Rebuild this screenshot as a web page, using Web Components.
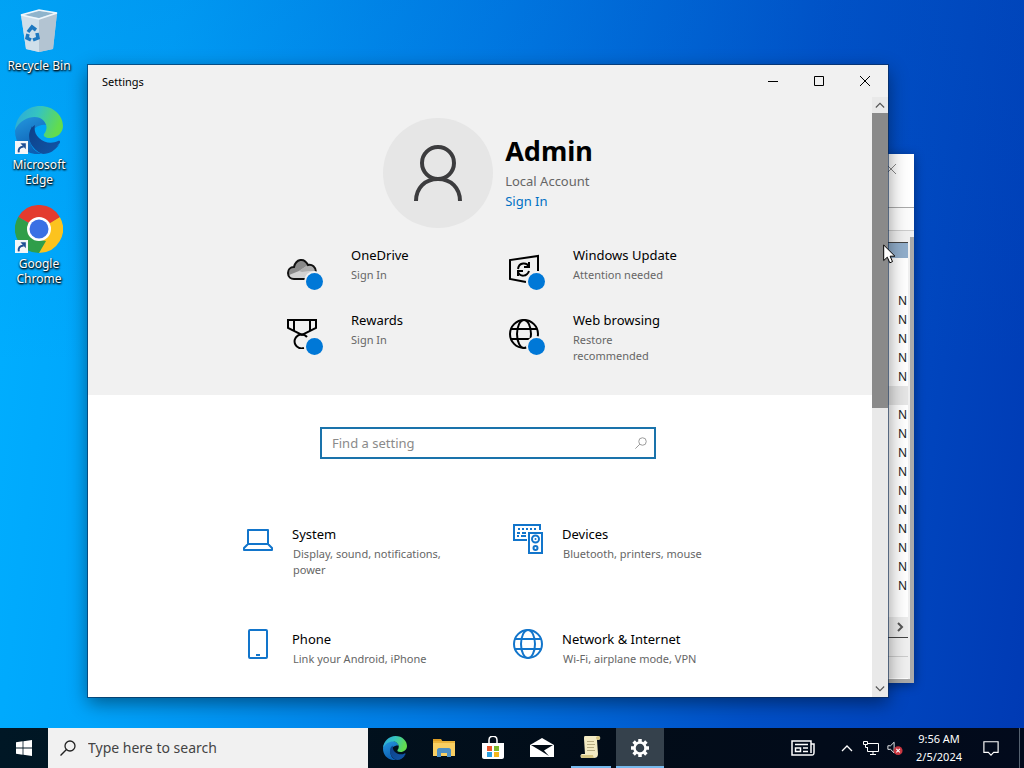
<!DOCTYPE html>
<html lang="en">
<head>
<meta charset="utf-8">
<meta name="viewport" content="width=device-width, initial-scale=1">
<title>Desktop</title>
<style>
  html, body {
    margin: 0;
    height: 100%;
    overflow: hidden;
    font-family: "Noto Sans", "Open Sans", sans-serif;
  }
</style>
</head>
<body>
<desktop-shell></desktop-shell>

<script>
'use strict';

const EDGE = `
  <defs>
    <linearGradient id="a" x1="0" y1="0" x2="1" y2=".3"><stop offset="0" stop-color="#2ba5df"/><stop offset=".5" stop-color="#35c4c0"/><stop offset="1" stop-color="#62dc4e"/></linearGradient>
    <linearGradient id="b" x1="0" y1="0" x2=".4" y2="1"><stop offset="0" stop-color="#2599df"/><stop offset="1" stop-color="#0c5fb4"/></linearGradient>
    <linearGradient id="c" x1="0" y1="0" x2="1" y2="1"><stop offset="0" stop-color="#0d4088"/><stop offset="1" stop-color="#1156a8"/></linearGradient>
  </defs>
  <path fill="url(#b)" d="M0 25C1 14 9 10 17 10c9 0 14 5 14 9-7-1-16 4-16 14 0 7 5 13 12 15C11 50 0 39 0 25z"/>
  <path fill="url(#c)" d="M20 19c-7 4-8 15-2 22 7 8 19 6 26-3 2-2 1-4-1-3-6 3-14 2-19-3-4-4-5-8-4-13z"/>
  <path fill="url(#c)" d="M17 20c-5 11 0 25 11 28 7 0 12-4 16-9-6 3-13 3-19-1-6-5-9-10-8-18z"/>
  <path fill="url(#a)" d="M0 24C1 10 12 0 25 0c14 0 23 10 23 20 0 7-6 12-13 12-5 0-7-2-6-4 4-5 3-10-1-14C22 8 6 11 0 24z"/>`;

const GLOBE = `
  <circle cx="15" cy="15" r="14"/><ellipse cx="15" cy="15" rx="7" ry="14"/>
  <path d="M2 10h26M2 20h26"/>`;

const ICONS = {
  bin: ['0 0 48 48', `
    <path fill="#b9d3e6" d="M6 8l18-5 18 3-4 36-14 3-13-3z"/>
    <path fill="#cfdfea" d="M6 8l18 4v33l-13-3z"/>
    <path fill="#b3c4d2" d="M42 6l-18 6v33l14-3z"/>
    <path fill="#8fb4cc" d="M9 8l15-4 15 2-15 5z"/>
    <path fill="none" stroke="#eef6fb" stroke-width="1.500" d="M6 8l18-5 18 3-18 6z"/>
    <path fill="none" stroke="#1c78c0" stroke-width="3.500" d="M13 25l4-5 4 3M22 26l1 5-5 2M16 33l-4-2 1-4"/>`],
  edge: ['0 0 48 48', EDGE],
  chrome: ['0 0 48 48', `
    <path fill="#e33b2e" d="M24 24L3.200 12A24 24 0 0 1 44.800 12z"/>
    <path fill="#fcc31e" d="M24 24l20.800-12A24 24 0 0 1 24 48z"/>
    <path fill="#2f9e4a" d="M24 24v24A24 24 0 0 1 3.200 12z"/>
    <path fill="#e33b2e" d="M24 12h20.800L32 20z"/>
    <path fill="#2f9e4a" d="M3.200 12l10.400 18 9-3z"/>
    <path fill="#fcc31e" d="M24 48l10.400-18-5-5z"/>
    <path fill="#2f9e4a" d="M24 48l7-12-10-2-7-4z"/>
    <circle cx="24" cy="24" r="12" fill="#fff"/><circle cx="24" cy="24" r="9.500" fill="#3a70e4"/>`],
  shortcut: ['0 0 12 12', `
    <path fill="#f4f6f8" d="M0 0h12v12H0z"/>
    <path fill="none" stroke="#1f4f94" stroke-width="1.800" d="M3.500 10.500C3 7.500 4 5.500 8 5"/>
    <path fill="#1f4f94" d="M5 2h5v5.500z"/>`],
  person: ['0 0 50 58', `
    <g fill="none" stroke="#3c3c3e" stroke-width="4"><circle cx="25" cy="19" r="16"/><path d="M3 57c0-13 9-22 22-22s22 9 22 22"/></g>`],
  onedrive: ['0 0 30 30', `
    <path fill="#d2d2d2" d="M7 25a6 6 0 0 1-1-12C8 4 17 4 21 11c5-1 8 3 8 7v7z"/>
    <path fill="#8a8a8a" d="M2 21c-1-5 2-8 5-8 2-8 11-8 14-2l-9 6z"/>
    <path fill="#aeaeae" d="M12 17l9-6c5-1 7 3 7 6l-6 0-7 1z"/>
    <path fill="none" stroke="#111" stroke-width="2" d="M29 18c0-5-4-8-8-7C17 3 9 5 7 13c-4 0-6 3-6 6 0 4 3 6 6 6h11"/>`],
  update: ['0 0 30 30', `
    <g fill="none" stroke="#000" stroke-width="2"><path d="M17 28L1 25V6l28-4v15"/><path d="M9 15c1-7 9-7 11-2M20 17c-2 6-9 6-11 1"/><path d="M20 8v5h-5M9 22v-5h5"/></g>`],
  rewards: ['0 0 30 30', `
    <g fill="none" stroke="#000" stroke-width="2"><path d="M1 1h28v8l-14 7L1 9zM7 1v11M23 1v11"/><path d="M20 18a7 7 0 1 0-3 11"/></g>`],
  web: ['0 0 30 30', `<g fill="none" stroke="#000" stroke-width="2">${GLOBE}</g>`],
  network: ['0 0 30 30', `<g fill="none" stroke="#1275cb" stroke-width="2">${GLOBE}</g>`],
  system: ['0 0 30 30', `
    <path fill="none" stroke="#1275cb" stroke-width="2" stroke-linejoin="round" d="M5 20V6h20v14M5 20h20l4 4v2H1v-2z"/>`],
  phone: ['0 0 30 30', `
    <g fill="none" stroke="#1275cb" stroke-width="2"><rect x="6" y="1" width="18" height="28" rx="1"/><path d="M13 26h4"/></g>`],
  devices: ['0 0 30 30', `
    <g fill="none" stroke="#1275cb" stroke-width="2"><path d="M14 16H1V1h26v5"/><path d="M5 5h18" stroke-dasharray="2 2"/><path d="M4 9h3M9 9h4M4 12h2M8 12h5"/>
    <path d="M16 9h13v20H16z"/><circle cx="22.500" cy="15" r="3.500"/><circle cx="22.500" cy="24" r="2"/></g><circle cx="22.500" cy="15" r="1" fill="#1275cb"/>`],
  search: ['0 0 16 16', `
    <g fill="none" stroke="currentColor" stroke-width="1.300"><circle cx="10" cy="6" r="5"/><path d="M6.500 9.500L.5 15.500"/></g>`],
  minimize: ['0 0 10 10', '<path stroke="currentColor" d="M0 5.500h10"/>'],
  maximize: ['0 0 10 10', '<path fill="none" stroke="currentColor" d="M.5.5h9v9h-9z"/>'],
  close: ['0 0 10 10', '<path fill="none" stroke="currentColor" d="M0 0l10 10M10 0L0 10"/>'],
  up: ['0 0 12 12', '<path fill="none" stroke="currentColor" stroke-width="1.300" d="M1 9l5-5 5 5"/>'],
  down: ['0 0 12 12', '<path fill="none" stroke="currentColor" stroke-width="1.300" d="M1 3l5 5 5-5"/>'],
  right: ['0 0 12 12', '<path fill="none" stroke="currentColor" stroke-width="2" d="M3 2l4 4-4 4"/>'],
  windows: ['0 0 16 16', '<path fill="#fff" d="M0 2.300l6.600-1v6.300H0zM7.400 1.200L16 0v7.600H7.400zM0 8.400h6.600v6.300L0 13.700zM7.400 8.400H16V16l-8.600-1.200z"/>'],
  explorer: ['0 0 24 24', `
    <path fill="#dd9d25" d="M1 3h8l2 3H1z"/><path fill="#f9cf62" d="M1 5h22v15H1z"/><path fill="#eab43c" d="M1 5h22v2H1z"/>
    <path fill="#4d8fc4" d="M5 21v-7c0-1 1-2 2-2h10c1 0 2 1 2 2v7h-4v-4H9v4z"/>`],
  store: ['0 0 24 24', `
    <path fill="none" stroke="#fff" stroke-width="1.500" d="M8 8V4c0-5 8-5 8 0v4"/><path fill="#fff" d="M1 7h22v14c0 1-1 2-2 2H3c-1 0-2-1-2-2z"/>
    <path fill="#e8552b" d="M6 10h5v5H6z"/><path fill="#7cb829" d="M13 10h5v5h-5z"/><path fill="#2ba0e0" d="M6 16h5v5H6z"/><path fill="#f6b71c" d="M13 16h5v5h-5z"/>`],
  mail: ['0 0 24 24', `
    <path fill="#fff" d="M0 9l12-7 12 7v12H0z"/><path fill="#020c16" d="M1 9h22l-9 5.500L19 20l-8-5z"/>`],
  scroll: ['0 0 24 24', `
    <path fill="#f3ebc4" d="M6 1h13c3 0 3 4 0 4h-1l1 14c0 3-2 4-4 4H3c-2 0-2-4 0-4h3L5 4c0-2 0-3 1-3z"/>
    <path fill="#d6c583" d="M17 3c0-2 4-3 4 0 0 2-2 2-3 2zM2 20h12c0 2 1 3 2 3H4c-2 0-2-2-2-3z"/>
    <path stroke="#b8ad83" d="M8 6.500h7M8 9.500h8M8 12.500h7M8 15.500h8"/>`],
  gear: ['0 0 24 24', `
    <g fill="none" stroke="#fff"><circle cx="12" cy="12" r="5.500" stroke-width="2.500"/>
    <path stroke-width="3.500" d="M12 3v3M12 18v3M3 12h3M18 12h3M5.600 5.600l2.200 2.200M16.200 16.200l2.200 2.200M5.600 18.400l2.200-2.200M16.200 7.800l2.200-2.200"/></g>`],
  news: ['0 0 24 16', `
    <g fill="none" stroke="#fff" stroke-width="1.500"><path d="M20 4V1H1v14h20c2 0 2-1 2-3V4h-3v9"/><path d="M4 4.500h13M12 8h5M12 11.500h5M4.500 8h5v3.500h-5z"/></g>`],
  net: ['0 0 16 16', `
    <g fill="none" stroke="#fff"><path d="M5 3.500h10.500v8H4.500V7M7 14.500h6M10 11.500v3"/><path d="M.5 1.500h4v3h-4zM2.500 4.500v3h2"/></g>`],
  sound: ['0 0 18 16', `
    <path fill="none" stroke="#fff" d="M1 5.500h3l4-4v12l-4-4H1z"/><circle cx="12.500" cy="11" r="5" fill="#c93640"/>
    <path stroke="#fff" stroke-width="1.200" d="M10.500 9l4 4M14.500 9l-4 4"/>`],
  action: ['0 0 18 18', '<path fill="none" stroke="#fff" stroke-width="1.300" d="M1 2h16v12h-5l-3 3-3-3H1z"/>'],
  pointer: ['0 0 13 20', '<path fill="#fff" stroke="#000" d="M.7 1v15.500l3.600-3.300 2.500 5.600 2.700-1.200-2.400-5.400h4.800z"/>'],
};

class UiIcon extends HTMLElement {
  static get is() { return 'ui-icon'; }
  constructor() {
    super();
    this.attachShadow({mode: 'open'});
  }
  connectedCallback() {
    const [box, shape] = ICONS[this.getAttribute('name')];
    this.shadowRoot.innerHTML = `
      <style>
        :host { display: block; flex: none; width: 16px; height: 16px; }
        svg { display: block; width: 100%; height: 100%; }
      </style>
      <svg viewBox="${box}" aria-hidden="true">${shape}</svg>
    `;
  }
}
customElements.define(UiIcon.is, UiIcon);

class DesktopIcon extends HTMLElement {
  static get is() { return 'desktop-icon'; }
  constructor() {
    super();
    this.attachShadow({mode: 'open'});
  }
  connectedCallback() {
    const link = this.hasAttribute('shortcut') ? '<ui-icon class="link" name="shortcut"></ui-icon>' : '';
    this.shadowRoot.innerHTML = `
      <style>
        :host { display: block; }
        button {
          display: flex; flex-direction: column; align-items: center; gap: 3px;
          width: 100%; padding: 0; border: 0; background: none;
          font: 12px/15px "Noto Sans", sans-serif; color: #fff;
          text-shadow: 0 1px 2px #000, 1px 1px 2px #000;
        }
        .art { position: relative; }
        .art ui-icon { width: 48px; height: 48px; }
        .art .link { position: absolute; left: 0; bottom: 0; width: 13px; height: 13px; }
        .label { max-width: 64px; }
      </style>
      <button type="button">
        <span class="art"><ui-icon name="${this.getAttribute('icon')}"></ui-icon>${link}</span>
        <span class="label"><slot></slot></span>
      </button>
    `;
    if (!link) this.shadowRoot.querySelector('.label').style.whiteSpace = 'nowrap';
  }
}
customElements.define(DesktopIcon.is, DesktopIcon);

class ScrollBar extends HTMLElement {
  static get is() { return 'scroll-bar'; }
  constructor() {
    super();
    this.attachShadow({mode: 'open'});
    this.shadowRoot.innerHTML = `
      <style>
        :host { display: flex; flex-direction: column; width: 16px; background: #e9e9e9; color: #555; }
        button { display: grid; place-items: center; height: 16px; padding: 0; border: 0; background: none; color: inherit; }
        ui-icon { width: 10px; height: 10px; }
        .track { flex: 1; }
        .thumb { height: 52%; background: #8a8a8a; }
      </style>
      <button type="button" aria-label="Scroll up"><ui-icon name="up"></ui-icon></button>
      <div class="track"><div class="thumb"></div></div>
      <button type="button" aria-label="Scroll down"><ui-icon name="down"></ui-icon></button>
    `;
  }
}
customElements.define(ScrollBar.is, ScrollBar);

// one status line in the account header
class StatusTile extends HTMLElement {
  static get is() { return 'status-tile'; }
  constructor() {
    super();
    this.attachShadow({mode: 'open'});
  }
  connectedCallback() {
    this.shadowRoot.innerHTML = `
      <style>
        :host { display: block; }
        a { display: flex; gap: 28px; padding-left: 21px; color: #000; text-decoration: none; }
        .art { position: relative; width: 36px; height: 36px; padding-top: 9px; }
        .art ui-icon { width: 30px; height: 30px; }
        .art i {
          position: absolute; right: 0; bottom: 0; width: 17px; height: 17px;
          border-radius: 50%; background: #0078d7; box-shadow: 0 0 0 2px #f1f1f1;
        }
        .text { display: flex; flex-direction: column; gap: 2px; flex: 1; max-width: 108px; }
        .title { font-size: 13px; line-height: 20px; white-space: nowrap; }
        .note { font-size: 11px; line-height: 16px; color: #666; }
      </style>
      <a href="#">
        <span class="art"><ui-icon name="${this.getAttribute('icon')}"></ui-icon><i></i></span>
        <span class="text">
          <span class="title">${this.getAttribute('heading')}</span>
          <span class="note"><slot></slot></span>
        </span>
      </a>
    `;
  }
}
customElements.define(StatusTile.is, StatusTile);

class SettingsCategory extends HTMLElement {
  static get is() { return 'settings-category'; }
  constructor() {
    super();
    this.attachShadow({mode: 'open'});
  }
  connectedCallback() {
    this.shadowRoot.innerHTML = `
      <style>
        :host { display: block; }
        a { display: flex; gap: 19px; padding: 0 10px 0 25px; color: #000; text-decoration: none; }
        ui-icon { width: 30px; height: 30px; }
        .text { display: flex; flex-direction: column; gap: 2px; flex: 1; }
        .title { font-size: 13px; line-height: 20px; }
        .note { font-size: 11px; line-height: 16px; color: #666; max-width: 160px; padding-left: 1px; }
      </style>
      <a href="#">
        <ui-icon name="${this.getAttribute('icon')}"></ui-icon>
        <span class="text">
          <span class="title">${this.getAttribute('heading')}</span>
          <span class="note"><slot></slot></span>
        </span>
      </a>
    `;
  }
}
customElements.define(SettingsCategory.is, SettingsCategory);

class SettingsWindow extends HTMLElement {
  static get is() { return 'settings-window'; }
  constructor() {
    super();
    this.attachShadow({mode: 'open'});
    this.shadowRoot.innerHTML = `
      <style>
        :host {
          display: flex; flex-direction: column; background: #fff; color: #000;
          outline: 1px solid rgba(10, 40, 80, .6);
          box-shadow: 0 6px 18px rgba(0, 0, 0, .45);
        }
        .bar { display: flex; align-items: center; height: 32px; padding-left: 14px; background: #f1f1f1; font-size: 11px; }
        .bar span { flex: 1; }
        .bar button { display: grid; place-items: center; width: 46px; height: 32px; padding: 0; border: 0; background: none; color: #000; }
        .bar ui-icon { width: 10px; height: 10px; }
        .body { position: relative; flex: 1; overflow: hidden; }
        scroll-bar { position: absolute; top: 0; right: 0; bottom: 0; }
        header { padding: 21px 0 20px; background: #f1f1f1; }
        .account { display: flex; justify-content: center; align-items: center; gap: 12px; }
        .avatar { display: grid; place-items: center; width: 110px; height: 110px; border-radius: 50%; background: #e6e6e6; }
        .avatar ui-icon { width: 50px; height: 58px; }
        .who { display: flex; flex-direction: column; padding-bottom: 5px; font-size: 13px; line-height: 20px; color: #666; }
        h1 { margin: 0; font-size: 27px; line-height: 40px; color: #000; }
        .who a { color: #0070c4; text-decoration: none; }
        .status { display: grid; grid-template-columns: 222px 222px; grid-auto-rows: minmax(65px, auto); justify-content: center; margin-top: 17px; }
        .find {
          display: flex; align-items: center; box-sizing: border-box; width: 336px; height: 32px;
          margin: 32px auto 65px; padding: 0 7px 0 10px; border: 2px solid #1a73ab; color: #999;
        }
        input { flex: 1; min-width: 0; padding: 0; border: 0; outline: 0; background: none; font: 13px/20px "Noto Sans", sans-serif; color: #000; }
        input::placeholder { color: #8a8a8a; opacity: 1; }
        .find ui-icon { width: 12px; height: 12px; }
        nav { display: grid; grid-template-columns: 270px 270px; grid-auto-rows: minmax(105px, auto); justify-content: center; }
      </style>
      <div class="bar">
        <span>Settings</span>
        <button type="button" aria-label="Minimize"><ui-icon name="minimize"></ui-icon></button>
        <button type="button" aria-label="Maximize"><ui-icon name="maximize"></ui-icon></button>
        <button type="button" aria-label="Close"><ui-icon name="close"></ui-icon></button>
      </div>
      <div class="body">
        <header>
          <div class="account">
            <div class="avatar"><ui-icon name="person"></ui-icon></div>
            <div class="who">
              <h1>Admin</h1>
              <span>Local Account</span>
              <a href="#">Sign In</a>
            </div>
          </div>
          <div class="status">
            <status-tile icon="onedrive" heading="OneDrive">Sign In</status-tile>
            <status-tile icon="update" heading="Windows Update">Attention needed</status-tile>
            <status-tile icon="rewards" heading="Rewards">Sign In</status-tile>
            <status-tile icon="web" heading="Web browsing">Restore recommended</status-tile>
          </div>
        </header>
        <label class="find">
          <input type="text" placeholder="Find a setting" aria-label="Find a setting">
          <ui-icon name="search"></ui-icon>
        </label>
        <nav>
          <settings-category icon="system" heading="System">Display, sound, notifications, power</settings-category>
          <settings-category icon="devices" heading="Devices">Bluetooth, printers, mouse</settings-category>
          <settings-category icon="phone" heading="Phone">Link your Android, iPhone</settings-category>
          <settings-category icon="network" heading="Network &amp; Internet">Wi-Fi, airplane mode, VPN</settings-category>
        </nav>
        <scroll-bar></scroll-bar>
      </div>
    `;
  }
}
customElements.define(SettingsWindow.is, SettingsWindow);

// classic window, mostly covered by the settings one
class ListWindow extends HTMLElement {
  static get is() { return 'list-window'; }
  constructor() {
    super();
    this.attachShadow({mode: 'open'});
    const rows = Array.from({length: 16}, (_, i) => i == 5 ? '<li class="gap"></li>' : '<li>N</li>').join('');
    this.shadowRoot.innerHTML = `
      <style>
        :host {
          display: flex; flex-direction: column; background: #f0f0f0; color: #222;
          box-shadow: 0 2px 10px rgba(0, 0, 0, .4);
        }
        .bar { display: flex; justify-content: flex-end; height: 53px; background: #fff; }
        .bar button { width: 46px; height: 30px; display: grid; place-items: center; padding: 0; border: 0; background: none; color: #888; }
        .bar ui-icon { width: 10px; height: 10px; }
        .tools { height: 22px; border-top: 1px solid #aaa; border-bottom: 1px solid #ccc; background: #fcfcfc; }
        .frame { flex: 1; display: flex; flex-direction: column; margin-top: 6px; border: solid #aaa; border-width: 0 4px 4px 0; }
        .pane { display: flex; flex-direction: column; flex: 1; margin-right: 2px; }
        .head { height: 15px; margin-top: 5px; border-top: 1px solid #444; background: #91aecb; }
        ul { flex: 1; margin: 0; padding: 33px 0 0; list-style: none; background: #fff; font-size: 12px; line-height: 19px; text-align: right; }
        li { height: 19px; padding-right: 1px; }
        .gap { background: #e6e6e6; }
        .slide { display: flex; align-items: center; justify-content: flex-end; height: 20px; border-bottom: 1px solid #444; background: #ececec; color: #555; }
        .slide ui-icon { width: 14px; height: 12px; }
        .foot { height: 18px; border-bottom: 1px solid #ccc; }
        .foot + .foot { height: 21px; border-bottom: 1px solid #fff; }
      </style>
      <div class="bar"><button type="button" aria-label="Close"><ui-icon name="close"></ui-icon></button></div>
      <div class="tools"></div>
      <div class="frame">
        <div class="pane">
          <div class="head"></div>
          <ul>${rows}</ul>
          <div class="slide"><ui-icon name="right"></ui-icon></div>
          <div class="foot"></div>
          <div class="foot"></div>
        </div>
      </div>
    `;
  }
}
customElements.define(ListWindow.is, ListWindow);

class TaskButton extends HTMLElement {
  static get is() { return 'task-button'; }
  constructor() {
    super();
    this.attachShadow({mode: 'open'});
  }
  connectedCallback() {
    this.shadowRoot.innerHTML = `
      <style>
        :host { display: flex; width: 48px; }
        button { flex: 1; display: grid; place-items: center; margin: 0; padding: 0; border: 0; background: none; }
        :host([open]) button { margin: 0 4px; border: solid #76b9ed; border-width: 0 0 2px; }
        :host([active]) button { border-bottom: 2px solid #76b9ed; padding-top: 2px; background: #35414c; }
        ui-icon { width: var(--size, 24px); height: var(--size, 24px); }
      </style>
      <button type="button" aria-label="${this.getAttribute('label')}"><ui-icon name="${this.getAttribute('icon')}"></ui-icon></button>
    `;
  }
}
customElements.define(TaskButton.is, TaskButton);

class TaskBar extends HTMLElement {
  static get is() { return 'task-bar'; }
  constructor() {
    super();
    this.attachShadow({mode: 'open'});
    this.shadowRoot.innerHTML = `
      <style>
        :host { display: flex; height: 40px; background: linear-gradient(90deg, #001725, #020c18 60%, #020a1c); color: #fff; }
        .start { --size: 16px; }
        .search { display: flex; align-items: center; gap: 12px; box-sizing: border-box; width: 320px; padding: 0 12px; background: #f1f1f1; color: #222; }
        .search ui-icon { width: 16px; height: 16px; }
        input { flex: 1; min-width: 0; padding: 0; border: 0; outline: 0; background: none; font: 14px/20px "Noto Sans", sans-serif; }
        input::placeholder { color: #444; opacity: 1; }
        .apps { flex: 1; display: flex; gap: 1px; margin-left: 3px; }
        .tray { display: flex; align-items: center; }
        .tray button { display: grid; place-items: center; height: 40px; padding: 0; border: 0; background: none; color: #fff; }
        .news { width: 48px; margin-right: 8px; }
        .news ui-icon { width: 24px; }
        .small { width: 24px; }
        .small ui-icon { width: 16px; }
        .more ui-icon { width: 12px; height: 12px; }
        time { width: 56px; margin-left: 4px; font-size: 11px; line-height: 18px; text-align: center; white-space: nowrap; }
        .action { width: 48px; }
        .peek { width: 4px; height: 40px; margin-left: 4px; border-left: 1px solid #566270; }
      </style>
      <task-button class="start" icon="windows" label="Start"></task-button>
      <label class="search">
        <ui-icon name="search"></ui-icon>
        <input type="text" placeholder="Type here to search" aria-label="Type here to search">
      </label>
      <div class="apps">
        <task-button icon="edge" label="Microsoft Edge"></task-button>
        <task-button icon="explorer" label="File Explorer"></task-button>
        <task-button icon="store" label="Microsoft Store"></task-button>
        <task-button icon="mail" label="Mail"></task-button>
        <task-button icon="scroll" label="Script" open></task-button>
        <task-button icon="gear" label="Settings" active></task-button>
      </div>
      <div class="tray">
        <button class="news" type="button" aria-label="News"><ui-icon name="news"></ui-icon></button>
        <button class="small more" type="button" aria-label="Hidden icons"><ui-icon name="up"></ui-icon></button>
        <button class="small" type="button" aria-label="Network"><ui-icon name="net"></ui-icon></button>
        <button class="small" type="button" aria-label="Volume"><ui-icon name="sound"></ui-icon></button>
        <time>9:56 AM<br>2/5/2024</time>
        <button class="action" type="button" aria-label="Notifications"><ui-icon name="action"></ui-icon></button>
        <span class="peek"></span>
      </div>
    `;
  }
}
customElements.define(TaskBar.is, TaskBar);

class DesktopShell extends HTMLElement {
  static get is() { return 'desktop-shell'; }
  constructor() {
    super();
    this.attachShadow({mode: 'open'});
    this.shadowRoot.innerHTML = `
      <style>
        :host { display: flex; flex-direction: column; height: 100vh; }
        main {
          position: relative; flex: 1; overflow: hidden;
          background:
            linear-gradient(180deg, rgba(0, 90, 190, .16), rgba(0, 90, 190, 0) 50%),
            linear-gradient(97deg, #00b0ff, #00a4fb 16%, #007ce6 45%, #0050c8 75%, #003ab4);
        }
        main > * { position: absolute; }
        desktop-icon { left: 1px; width: 76px; }
        .bin { top: 7px; }
        .edge { top: 106px; }
        .chrome { top: 205px; }
        list-window { left: 414px; top: 154px; width: 500px; height: 529px; }
        settings-window { left: 88px; top: 65px; width: 800px; height: 632px; }
        .pointer { left: 883px; top: 244px; width: 13px; height: 20px; }
      </style>
      <main>
        <desktop-icon class="bin" icon="bin">Recycle Bin</desktop-icon>
        <desktop-icon class="edge" icon="edge" shortcut>Microsoft Edge</desktop-icon>
        <desktop-icon class="chrome" icon="chrome" shortcut>Google Chrome</desktop-icon>
        <list-window></list-window>
        <settings-window></settings-window>
        <ui-icon class="pointer" name="pointer"></ui-icon>
      </main>
      <task-bar></task-bar>
    `;
  }
}
customElements.define(DesktopShell.is, DesktopShell);
</script>
</body>
</html>
